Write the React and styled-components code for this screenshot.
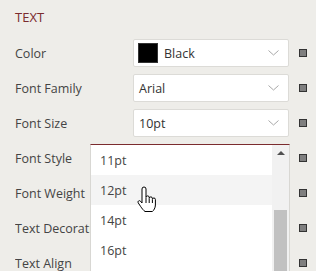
import React from "react";
import styled, { createGlobalStyle } from "styled-components";

const Global = createGlobalStyle`
  html, body { margin: 0; padding: 0; background: #eeede9; }
  body { font-family: "Open Sans", "Noto Sans", sans-serif; overflow: hidden; }
`;

const Panel = styled.div`
  position: relative;
  width: 316px;
  height: 271px;
  overflow: hidden;
  background: #eeede9;
  padding: 9px 0 0 15px;
  box-sizing: border-box;
`;

const Heading = styled.div`
  color: #7b2b2e;
  font-size: 13px;
  line-height: 16px;
  height: 30px;
`;

const Rows = styled.div`
  display: flex;
  flex-direction: column;
  gap: 7px;
`;

const Row = styled.div`
  display: grid;
  grid-template-columns: 108px 156px 8px;
  column-gap: 10px;
  align-items: center;
  height: 28px;
`;

const Label = styled.div`
  color: #444;
  font-size: 12.5px;
  white-space: nowrap;
  overflow: hidden;
`;

const Select = styled.div`
  height: 28px;
  box-sizing: border-box;
  background: #fff;
  border: 1px solid #dcdbd7;
  border-radius: 2px;
  display: flex;
  align-items: center;
  padding: 0 9px 0 4px;
  gap: 6px;
  color: #333;
  font-size: 12.5px;
`;

const Value = styled.span`
  flex: 1;
  padding-left: ${(p) => (p.$swatch ? 0 : 1)}px;
`;

const Swatch = styled.span`
  width: 20px;
  height: 20px;
  box-sizing: border-box;
  background: #000;
  border: 1px solid #333;
`;

const Marker = styled.span`
  width: 8px;
  height: 8px;
  box-sizing: border-box;
  background: #7f7f7f;
  border: 1px solid #333;
`;

const Menu = styled.div`
  position: absolute;
  left: 90px;
  top: 144px;
  width: 200px;
  height: 140px;
  box-sizing: border-box;
  background: #fff;
  border: 1px solid #d8d7d3;
  border-top: 1px solid #7b2b2e;
  display: grid;
  grid-template-columns: 1fr 17px;
`;

const List = styled.div`
  display: flex;
  flex-direction: column;
`;

const Item = styled.div`
  height: 30px;
  display: flex;
  align-items: center;
  padding-left: 9px;
  color: #444;
  font-size: 12.5px;
  background: ${(p) => (p.$hover ? "#f4f4f4" : "#fff")};
`;

const Scrollbar = styled.div`
  background: #f1f1f1;
  position: relative;
  display: flex;
  flex-direction: column;
  align-items: center;
`;

const ArrowUp = styled.span`
  margin-top: 6px;
  width: 0;
  height: 0;
  border-left: 4px solid transparent;
  border-right: 4px solid transparent;
  border-bottom: 4px solid #505050;
`;

const Thumb = styled.span`
  margin-top: 55px;
  width: 13px;
  flex: 1;
  background: #c1c1c1;
`;

const Cursor = styled.svg`
  position: absolute;
  left: 137px;
  top: 186px;
`;

const Chevron = () => (
  <svg width="11" height="6" viewBox="0 0 11 6">
    <path d="M0.5 0.5 L5.5 5 L10.5 0.5" fill="none" stroke="#a8a8a8" strokeWidth="1" />
  </svg>
);

const rows = [
  { label: "Color", value: "Black", swatch: true, select: true },
  { label: "Font Family", value: "Arial", select: true },
  { label: "Font Size", value: "10pt", select: true },
  { label: "Font Style" },
  { label: "Font Weight" },
  { label: "Text Decoration" },
  { label: "Text Align" },
];

export default function App() {
  return (
    <>
      <Global />
      <Panel>
        <Heading>TEXT</Heading>
        <Rows>
          {rows.map((r) => (
            <Row key={r.label}>
              <Label>{r.label}</Label>
              {r.select ? (
                <Select>
                  {r.swatch && <Swatch />}
                  <Value $swatch={r.swatch}>{r.value}</Value>
                  <Chevron />
                </Select>
              ) : (
                <span />
              )}
              <Marker />
            </Row>
          ))}
        </Rows>
        <Menu>
          <List>
            <Item>11pt</Item>
            <Item $hover>12pt</Item>
            <Item>14pt</Item>
            <Item>16pt</Item>
          </List>
          <Scrollbar>
            <ArrowUp />
            <Thumb />
          </Scrollbar>
        </Menu>
        <Cursor width="19" height="27" viewBox="0 0 19 27">
          <path
            d="M5 3 a2 2 0 0 1 4 0 V11.5 a1.6 1.6 0 0 1 3.2 0 V12.5 a1.6 1.6 0 0 1 3.2 0 V13.5 a1.5 1.5 0 0 1 3 0 V19 c0 3 -1.8 5.5 -3 6.5 H8 c-1.5 -1 -3 -3 -4.5 -5.2 L1.2 16.8 a1.4 1.4 0 0 1 2.2 -1.7 L5 17 Z"
            fill="#fff"
            stroke="#000"
            strokeWidth="1"
            strokeLinejoin="round"
          />
          <path d="M9 12 V17 M12.2 13 V17 M15.4 14 V17" stroke="#000" strokeWidth="1" fill="none" />
        </Cursor>
      </Panel>
    </>
  );
}
